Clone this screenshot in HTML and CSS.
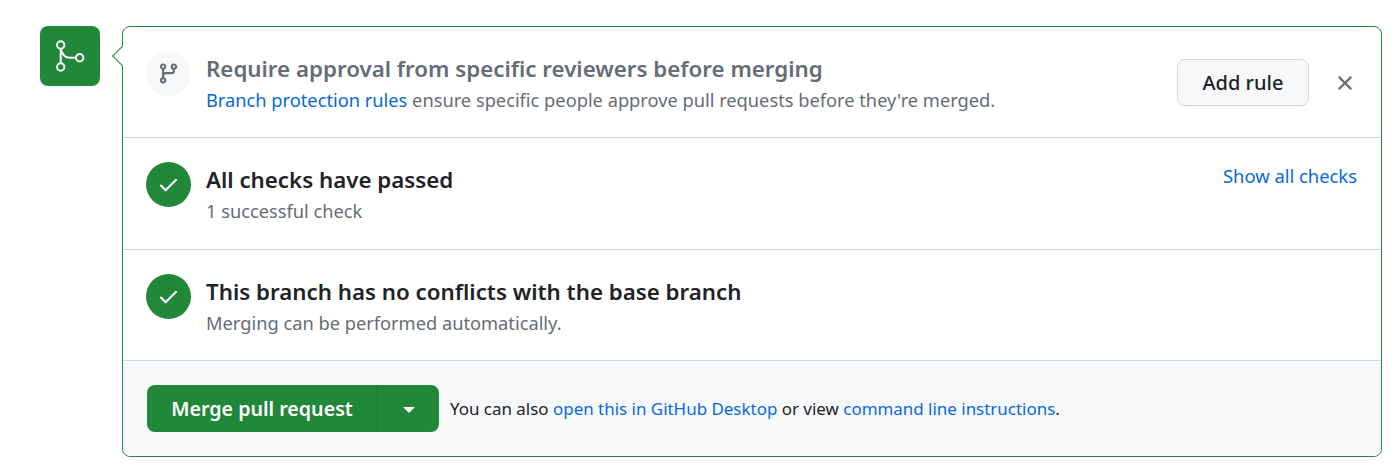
FILE: index.html
```html
<!DOCTYPE html>
<html lang="en">
<head>
  <meta charset="UTF-8" />
  <title>Merge pull request</title>
  <link rel="stylesheet" href="styles.css">
</head>
<body>
  <div class="merge-box">
    <div class="merge-badge">
      <svg width="32" height="32" viewBox="0 0 32 32" fill="none" stroke="currentColor" stroke-width="2">
        <circle cx="6.7" cy="5" r="3.7"/>
        <circle cx="6.7" cy="27" r="3.7"/>
        <circle cx="25.7" cy="17.7" r="3.7"/>
        <path d="M6.7 8.7V23.3M6.9 9C8 14.5 11.5 17.7 16 17.7H22"/>
      </svg>
    </div>
    <div class="card">
      <div class="row">
        <div class="status status-muted">
          <svg width="23" height="23" viewBox="0 0 16 16" fill="currentColor"><path d="M9.5 3.25a2.25 2.25 0 1 1 3 2.122V6A2.5 2.5 0 0 1 10 8.5H6a1 1 0 0 0-1 1v1.128a2.251 2.251 0 1 1-1.5 0V5.372a2.25 2.25 0 1 1 1.5 0v1.836A2.493 2.493 0 0 1 6 7h4a1 1 0 0 0 1-1v-.628A2.25 2.25 0 0 1 9.5 3.25Zm-6 0a.75.75 0 1 0 1.5 0 .75.75 0 0 0-1.5 0Zm8.25-.75a.75.75 0 1 0 0 1.5.75.75 0 0 0 0-1.5ZM4.25 12a.75.75 0 1 0 0 1.5.75.75 0 0 0 0-1.5Z"/></svg>
        </div>
        <div class="row-text">
          <h3 class="title title-muted">Require approval from specific reviewers before merging</h3>
          <p class="sub"><a href="#">Branch protection rules</a> ensure specific people approve pull requests before they're merged.</p>
        </div>
        <button class="btn-rule">Add rule</button>
        <svg class="close" width="24" height="24" viewBox="0 0 16 16" fill="currentColor"><path d="M3.72 3.72a.75.75 0 0 1 1.06 0L8 6.94l3.22-3.22a.749.749 0 0 1 1.06 1.06L9.06 8l3.22 3.22a.749.749 0 0 1-1.06 1.06L8 9.06l-3.22 3.22a.749.749 0 0 1-1.06-1.06L6.94 8 3.72 4.78a.75.75 0 0 1 0-1.06Z"/></svg>
      </div>
      <div class="row row-tall">
        <div class="status status-ok">
          <svg width="23" height="23" viewBox="0 0 16 16" fill="currentColor"><path d="M13.78 4.22a.75.75 0 0 1 0 1.06l-7.25 7.25a.75.75 0 0 1-1.06 0L2.22 9.28a.751.751 0 0 1 1.06-1.06L6 10.94l6.72-6.72a.75.75 0 0 1 1.06 0Z"/></svg>
        </div>
        <div class="row-text">
          <h3 class="title">All checks have passed</h3>
          <p class="sub">1 successful check</p>
        </div>
        <a class="show-all" href="#">Show all checks</a>
      </div>
      <div class="row">
        <div class="status status-ok">
          <svg width="23" height="23" viewBox="0 0 16 16" fill="currentColor"><path d="M13.78 4.22a.75.75 0 0 1 0 1.06l-7.25 7.25a.75.75 0 0 1-1.06 0L2.22 9.28a.751.751 0 0 1 1.06-1.06L6 10.94l6.72-6.72a.75.75 0 0 1 1.06 0Z"/></svg>
        </div>
        <div class="row-text">
          <h3 class="title">This branch has no conflicts with the base branch</h3>
          <p class="sub">Merging can be performed automatically.</p>
        </div>
      </div>
      <div class="footer">
        <div class="merge-group">
          <button class="btn-merge">Merge pull request</button>
          <button class="btn-caret"><span class="caret"></span></button>
        </div>
        <p class="hint">You can also <a href="#">open this in GitHub Desktop</a> or view <a href="#">command line instructions</a>.</p>
      </div>
    </div>
  </div>
</body>
</html>
```
FILE: styles.css
```css
body {
  margin: 0;
  font-family: "Noto Sans", sans-serif;
  background-color: #fff;
  color: #1f2328;
}
a {
  color: #0969da;
  text-decoration: none;
}
.merge-box {
  display: flex;
  gap: 22px;
  padding: 26px 17px 0 40px;
}
.merge-badge {
  display: flex;
  align-items: center;
  justify-content: center;
  flex: none;
  width: 60px;
  height: 60px;
  border-radius: 8px;
  background-color: #218739;
  color: #fff;
}
.card {
  position: relative;
  flex: 1;
  height: 431px;
  box-sizing: border-box;
  border: 1px solid #218739;
  border-radius: 8px;
  display: flex;
  flex-direction: column;
}
/* little arrow pointing at the badge */
.card::before {
  content: '';
  position: absolute;
  top: 22px;
  left: -8px;
  width: 14px;
  height: 14px;
  box-sizing: border-box;
  background-color: #fff;
  border-left: 1px solid #218739;
  border-bottom: 1px solid #218739;
  transform: rotate(45deg);
}
.row {
  display: flex;
  align-items: flex-start;
  gap: 15px;
  height: 111px;
  box-sizing: border-box;
  padding: 24px 24px 0 23px;
  border-bottom: 1px solid #d0d7de;
}
.row-tall {
  height: 112px;
}
.status {
  display: flex;
  align-items: center;
  justify-content: center;
  flex: none;
  width: 45px;
  height: 45px;
  border-radius: 50%;
}
.status-muted {
  background-color: #f6f8fa;
  color: #656d76;
}
.status-ok {
  background-color: #218739;
  color: #fff;
}
.row-text {
  flex: 1;
}
.title {
  margin: 0;
  padding-top: 1px;
  font-size: 22.3px;
  line-height: 33px;
  font-weight: 600;
}
.title-muted {
  color: #656d76;
}
.sub {
  margin: 0;
  font-size: 18.25px;
  line-height: 30px;
  color: #656d76;
}
.btn-rule {
  margin: 8px 9px 0 0;
  width: 132px;
  height: 47px;
  font: 500 20px "Noto Sans", sans-serif;
  color: #1f2328;
  background-color: #f6f8fa;
  border: 1px solid #d5d8dc;
  border-radius: 8px;
  box-shadow: 0 1px 0 rgba(31,35,40,0.04);
}
.close {
  margin-top: 20px;
  flex: none;
  color: #656d76;
}
.show-all {
  font-size: 18.4px;
  line-height: 28px;
}
.footer {
  flex: 1;
  display: flex;
  align-items: flex-start;
  gap: 11px;
  padding: 24px 0 0 24px;
  background-color: #f6f8fa;
  border-radius: 0 0 8px 8px;
}
.merge-group {
  display: flex;
  height: 47px;
}
.btn-merge, .btn-caret {
  border: none;
  color: #fff;
  background-color: #218739;
}
.btn-merge {
  width: 230px;
  font: 600 19.65px "Noto Sans", sans-serif;
  border-radius: 8px 0 0 8px;
}
.btn-caret {
  width: 62px;
  border-left: 1px solid #1c7532;
  border-radius: 0 8px 8px 0;
}
.caret {
  display: inline-block;
  border-top: 6px solid #fff;
  border-left: 6px solid transparent;
  border-right: 6px solid transparent;
  margin-top: 3px;
}
.hint {
  margin: 0;
  font-size: 16.96px;
  line-height: 47px;
  color: #1f2328;
}
```
